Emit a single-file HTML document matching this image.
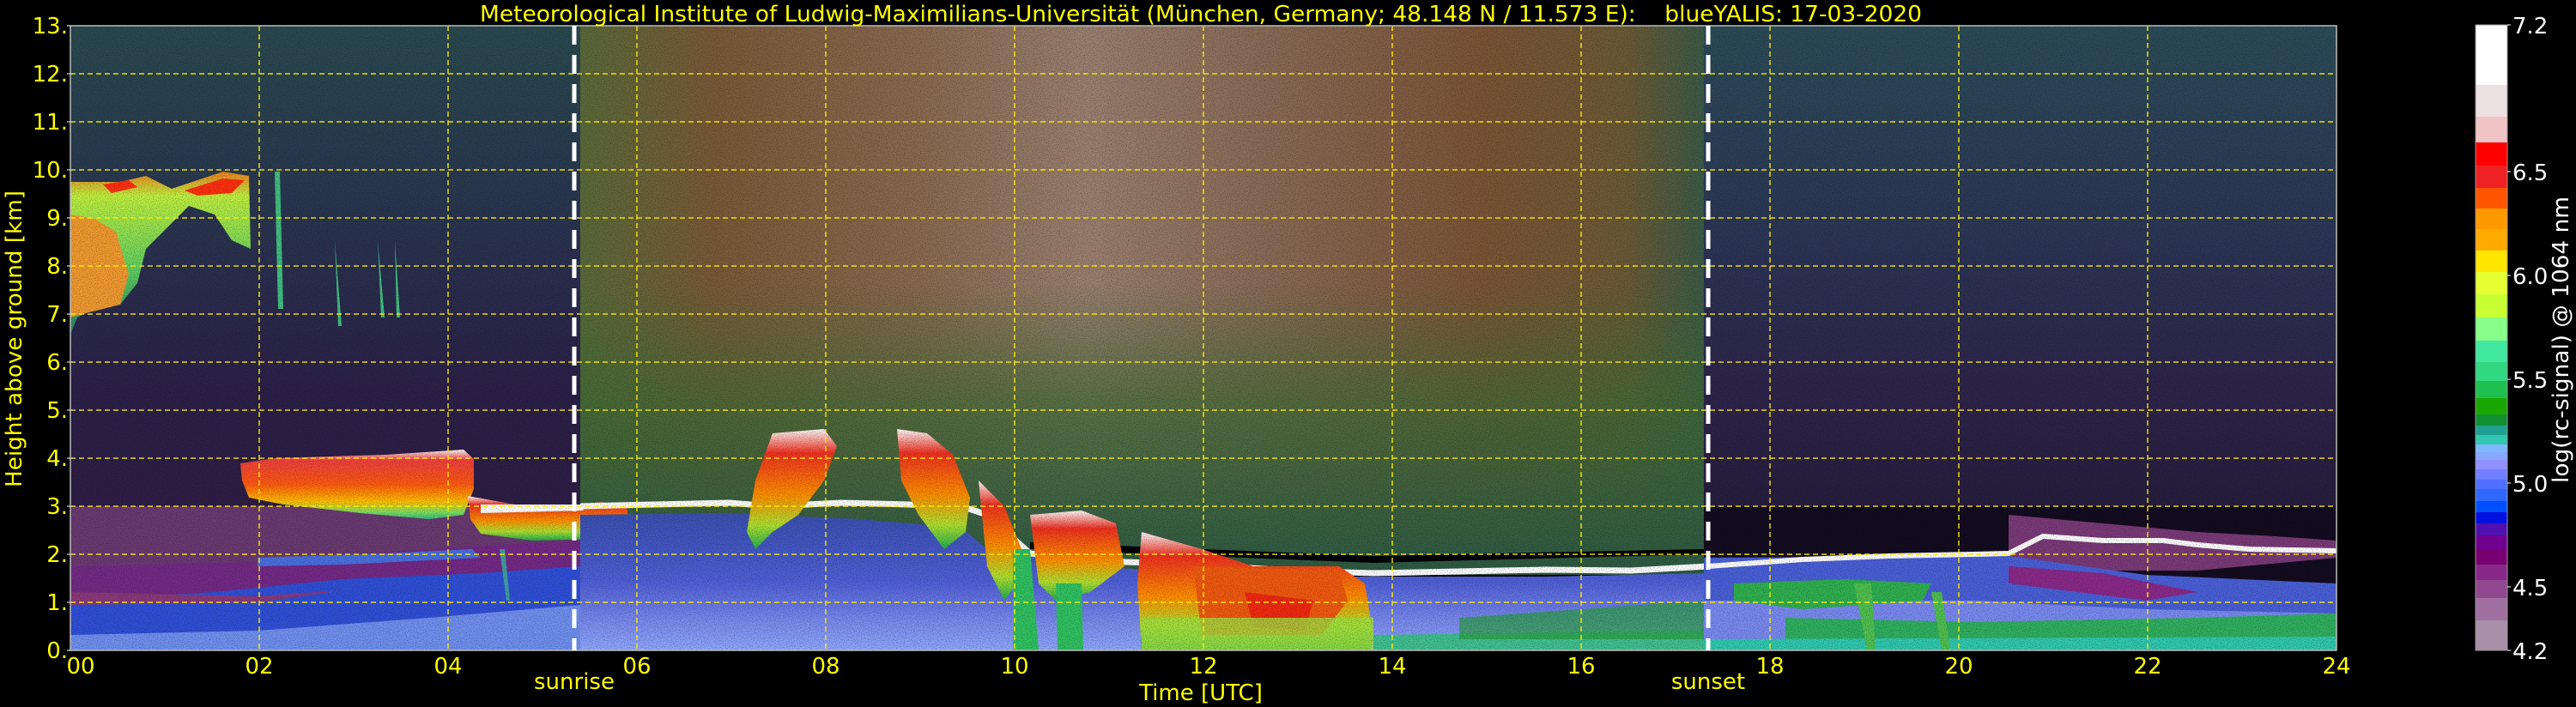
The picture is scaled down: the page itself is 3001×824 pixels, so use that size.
<!DOCTYPE html>
<html><head><meta charset="utf-8"><style>
html,body{margin:0;padding:0;background:#000;width:3001px;height:824px;overflow:hidden}
svg{display:block}
text{font-family:"DejaVu Sans","Liberation Sans",sans-serif}
</style></head><body>
<svg width="3001" height="824" viewBox="0 0 3001 824" xmlns="http://www.w3.org/2000/svg">
<defs>
<filter id="nz" x="0" y="0" width="100%" height="100%">
<feTurbulence type="fractalNoise" baseFrequency="0.9" numOctaves="1" seed="3"/>
<feColorMatrix type="matrix" values="0 0 0 0 0  0 0 0 0 0  0 0 0 0 0  0 0 0 -2.2 1.25"/>
</filter>
<linearGradient id="daytop" x1="0" x2="1" y1="0" y2="0">
<stop offset="0" stop-color="#5a6a3a"/><stop offset="0.12" stop-color="#7a5a38"/>
<stop offset="0.3" stop-color="#8a6a50"/><stop offset="0.45" stop-color="#9a8070"/>
<stop offset="0.6" stop-color="#8a6c58"/><stop offset="0.8" stop-color="#7c5436"/>
<stop offset="0.93" stop-color="#6a5a36"/><stop offset="1" stop-color="#3a5a48"/>
</linearGradient>
<linearGradient id="daygreen" x1="0" x2="0" y1="0" y2="1">
<stop offset="0" stop-color="#3f6a34" stop-opacity="0"/><stop offset="0.4" stop-color="#3f6a34" stop-opacity="0.7"/>
<stop offset="1" stop-color="#2c5a44" stop-opacity="1"/>
</linearGradient>
<linearGradient id="nightL" x1="0" x2="0" y1="0" y2="1">
<stop offset="0" stop-color="#2a4a50"/><stop offset="0.45" stop-color="#2a3250"/><stop offset="0.75" stop-color="#2c2048"/><stop offset="1" stop-color="#2e1e46"/>
</linearGradient>
<linearGradient id="nightR" x1="0" x2="0" y1="0" y2="1">
<stop offset="0" stop-color="#2c4c58"/><stop offset="0.4" stop-color="#2c3656"/><stop offset="0.7" stop-color="#2e244a"/><stop offset="1" stop-color="#241a38"/>
</linearGradient>
<linearGradient id="cloud1" x1="0" x2="0" y1="0" y2="1">
<stop offset="0" stop-color="#ffffff"/><stop offset="0.15" stop-color="#f04040"/><stop offset="0.5" stop-color="#ff5a10"/><stop offset="0.75" stop-color="#ffc000"/><stop offset="0.9" stop-color="#80e060"/><stop offset="1" stop-color="#30c080"/>
</linearGradient>
<linearGradient id="cloud2" x1="0" x2="0" y1="0" y2="1">
<stop offset="0" stop-color="#ffffff"/><stop offset="0.2" stop-color="#f03020"/><stop offset="0.55" stop-color="#ff9000"/><stop offset="0.8" stop-color="#b0e030"/><stop offset="1" stop-color="#20b050"/>
</linearGradient>
<linearGradient id="cirrus" x1="0" x2="0" y1="0" y2="1">
<stop offset="0" stop-color="#f08020"/><stop offset="0.15" stop-color="#c0f040"/><stop offset="0.6" stop-color="#60d060"/><stop offset="1" stop-color="#2a8060"/>
</linearGradient>
<linearGradient id="dayblue" x1="0" x2="0" y1="0" y2="1">
<stop offset="0" stop-color="#3a50b0"/><stop offset="0.5" stop-color="#5060d8"/><stop offset="0.8" stop-color="#7c8cf0"/><stop offset="1" stop-color="#90a8ff"/>
</linearGradient>
</defs>

<rect x="82" y="30" width="2640" height="728" fill="#000"/>
<rect x="82" y="30" width="600" height="570" fill="url(#nightL)"/>
<rect x="676" y="30" width="1312" height="640" fill="url(#daytop)"/>
<rect x="676" y="330" width="1312" height="340" fill="url(#daygreen)"/>
<rect x="1985" y="30" width="737" height="620" fill="url(#nightR)"/>

<!-- left night boundary layer -->
<path d="M82 590 L676 590 L676 758 L82 758Z" fill="#6a3a72"/>
<path d="M82 660 L300 655 L500 640 L676 630 L676 758 L82 758Z" fill="#742a86"/>
<path d="M82 700 L250 690 L400 675 L560 668 L676 660 L676 758 L82 758Z" fill="#3050d8"/>
<path d="M82 740 L300 735 L500 720 L676 705 L676 758 L82 758Z" fill="#7090f0"/>
<path d="M300 650 L450 645 L550 640 L560 650 L400 658 L300 660Z" fill="#4a70e0"/>
<path d="M82 690 L300 695 L400 688 L300 702 L82 705Z" fill="#8a3a7a"/>

<!-- cirrus -->
<path d="M82 212 L140 212 L170 205 L200 220 L230 210 L260 200 L290 205 L292 290 L270 280 L250 250 L220 240 L200 260 L170 290 L160 330 L140 355 L110 360 L90 370 L82 390Z" fill="url(#cirrus)"/>
<path d="M82 250 L110 255 L135 270 L150 320 L140 355 L100 365 L82 370Z" fill="#f09a30"/>
<path d="M120 215 L150 210 L160 218 L130 225Z M215 222 L260 208 L285 210 L270 225 L230 228Z" fill="#ff3010"/>
<path d="M320 200 L324 360 L330 360 L326 200Z M390 280 L394 380 L398 380Z M440 280 L444 370 L448 370Z M460 280 L462 370 L466 370Z" fill="#40c080"/>

<!-- cloud layer 02-05 -->
<path d="M280 540 L320 534 L450 530 L540 524 L552 535 L552 570 L540 600 L500 605 L420 598 L330 588 L290 580 L282 560Z" fill="url(#cloud1)"/>
<path d="M545 578 L600 588 L676 588 L700 585 L730 590 L735 620 L700 628 L620 630 L560 622 L548 605Z" fill="url(#cloud2)"/>
<path d="M560 588 L676 588 L680 595 L560 598Z" fill="#fff"/>
<path d="M582 640 L590 700 L594 700 L588 640Z" fill="#40a0a0"/>

<!-- day lower blue -->
<path d="M676 600 L850 598 L1000 605 L1120 615 L1150 640 L1300 662 L1500 672 L1800 672 L1988 668 L1988 758 L676 758Z" fill="url(#dayblue)"/>
<path d="M1985 646 L1600 656 L1200 640 L1200 632 L1600 648 L1985 640Z" fill="#000"/>
<path d="M676 590 L760 588 L850 586 L900 590 L980 586 L1060 588 L1120 590 L1150 600 L1200 645 L1250 650 L1310 655 L1400 658 L1500 665 L1600 668 L1800 664 L1900 665 L1990 660" fill="none" stroke="#fff" stroke-width="7"/>

<!-- day clouds -->
<path d="M900 505 L960 500 L975 520 L960 560 L930 600 L900 620 L880 640 L870 620 L880 560Z" fill="url(#cloud2)"/>
<path d="M1045 500 L1080 505 L1110 530 L1130 580 L1125 620 L1100 640 L1070 600 L1050 560Z" fill="url(#cloud2)"/>
<path d="M1140 560 L1170 590 L1190 640 L1185 680 L1170 700 L1150 660Z" fill="url(#cloud2)"/>
<path d="M1200 600 L1260 595 L1300 610 L1310 660 L1270 690 L1230 700 L1210 680Z" fill="url(#cloud2)"/>
<path d="M1180 640 L1200 640 L1210 758 L1180 758Z M1230 680 L1260 680 L1262 758 L1232 758Z" fill="#30c060"/>
<path d="M1330 620 L1400 640 L1460 660 L1560 660 L1590 680 L1600 740 L1595 758 L1330 758 L1325 680Z" fill="url(#cloud2)"/>
<path d="M1390 660 L1560 665 L1570 700 L1540 740 L1400 740 L1395 700Z" fill="#f05a10"/>
<path d="M1450 690 L1530 700 L1520 735 L1460 730Z" fill="#f02a10"/>
<path d="M1330 720 L1600 720 L1600 758 L1330 758Z" fill="#a0e040" opacity="0.8"/>
<path d="M1600 740 L1990 735 L1990 758 L1600 758Z" fill="#40c090"/>
<path d="M1700 720 L1985 700 L1985 745 L1700 745Z" fill="#2aa040" opacity="0.7"/>

<!-- right night -->
<path d="M1985 590 L2722 590 L2722 700 L1985 700Z" fill="#140c20"/>
<path d="M2340 600 L2450 610 L2560 620 L2650 625 L2722 630 L2722 650 L2560 665 L2450 665 L2340 660Z" fill="#7a3a78"/>
<path d="M1985 650 L2340 648 L2500 670 L2722 680 L2722 758 L1985 758Z" fill="#4a60d8"/>
<path d="M2340 660 L2450 668 L2560 690 L2500 700 L2340 680Z" fill="#8a2a8a"/>
<path d="M1985 700 L2300 700 L2500 710 L2722 715 L2722 758 L1985 758Z" fill="#7a8af0"/>
<path d="M2080 720 L2300 725 L2560 720 L2722 715 L2722 745 L2300 748 L2080 745Z" fill="#30b060"/>
<path d="M1985 745 L2722 742 L2722 758 L1985 758Z" fill="#30c8b0"/>
<path d="M2020 680 L2150 675 L2250 680 L2240 700 L2100 710 L2020 700Z" fill="#30b050"/>
<path d="M2160 680 L2175 758 L2185 758 L2180 680Z M2250 690 L2262 758 L2272 758 L2262 690Z" fill="#50c050"/>
<path d="M1990 660 L2100 652 L2200 648 L2300 646 L2340 645 L2380 625 L2450 630 L2520 630 L2560 635 L2620 640 L2722 642" fill="none" stroke="#fff" stroke-width="6"/>

<rect x="82" y="30" width="2640" height="728" fill="#000" filter="url(#nz)" opacity="0.35"/>

<g stroke="#ffee00" stroke-width="1.5" stroke-dasharray="6,4" fill="none" opacity="0.9">
<path d="M82 702H2722M82 646H2722M82 590H2722M82 534H2722M82 478H2722M82 422H2722M82 366H2722M82 310H2722M82 254H2722M82 198H2722M82 142H2722M82 86H2722"/>
<path d="M302 30V758M522 30V758M742 30V758M962 30V758M1182 30V758M1402 30V758M1622 30V758M1842 30V758M2062 30V758M2282 30V758M2502 30V758"/>
</g>
<rect x="82" y="30" width="2640" height="728" fill="none" stroke="#bbb" stroke-width="1.5"/>
<path d="M669 30V758M1990 30V758" stroke="#fff" stroke-width="5" stroke-dasharray="22,12"/>

<text x="559" y="25" fill="#ffff00" font-size="26" textLength="1680" lengthAdjust="spacingAndGlyphs" xml:space="preserve">Meteorological Institute of Ludwig-Maximilians-Universität (München, Germany; 48.148 N / 11.573 E):    blueYALIS: 17-03-2020</text>

<g fill="#ffff00" font-size="26" text-anchor="end">
<text x="79" y="39">13.</text><text x="79" y="95">12.</text><text x="79" y="151">11.</text><text x="79" y="207">10.</text>
<text x="79" y="263">9.</text><text x="79" y="319">8.</text><text x="79" y="375">7.</text><text x="79" y="431">6.</text>
<text x="79" y="487">5.</text><text x="79" y="543">4.</text><text x="79" y="599">3.</text><text x="79" y="655">2.</text>
<text x="79" y="711">1.</text><text x="79" y="767">0.</text>
</g>
<g stroke="#fff" stroke-width="1"><path d="M78 30H82M78 86H82M78 142H82M78 198H82M78 254H82M78 310H82M78 366H82M78 422H82M78 478H82M78 534H82M78 590H82M78 646H82M78 702H82M78 758H82"/></g>
<text transform="translate(25,395) rotate(-90)" fill="#ffff00" font-size="26" text-anchor="middle" textLength="346" lengthAdjust="spacingAndGlyphs">Height above ground [km]</text>

<g fill="#ffff00" font-size="26" text-anchor="middle">
<text x="94" y="785">00</text><text x="302" y="785">02</text><text x="522" y="785">04</text><text x="742" y="785">06</text>
<text x="962" y="785">08</text><text x="1182" y="785">10</text><text x="1402" y="785">12</text><text x="1622" y="785">14</text>
<text x="1842" y="785">16</text><text x="2062" y="785">18</text><text x="2282" y="785">20</text><text x="2502" y="785">22</text>
<text x="2722" y="785">24</text>
<text x="669" y="803">sunrise</text><text x="1990" y="803">sunset</text>
<text x="1399" y="816">Time [UTC]</text>
</g>

<g>
<rect x="2884" y="29" width="37" height="70" fill="#ffffff"/>
<rect x="2884" y="99" width="37" height="37" fill="#ebe0e2"/>
<rect x="2884" y="136" width="37" height="30" fill="#f0c4c4"/>
<rect x="2884" y="166" width="37" height="27" fill="#ff0000"/>
<rect x="2884" y="193" width="37" height="26" fill="#ee2222"/>
<rect x="2884" y="219" width="37" height="24" fill="#ff5500"/>
<rect x="2884" y="243" width="37" height="24" fill="#ff9900"/>
<rect x="2884" y="267" width="37" height="25" fill="#ffaa00"/>
<rect x="2884" y="292" width="37" height="25" fill="#ffe600"/>
<rect x="2884" y="317" width="37" height="26" fill="#e6ff33"/>
<rect x="2884" y="343" width="37" height="27" fill="#c8ff33"/>
<rect x="2884" y="370" width="37" height="27" fill="#88ff88"/>
<rect x="2884" y="397" width="37" height="25" fill="#40e8a0"/>
<rect x="2884" y="422" width="37" height="22" fill="#30d880"/>
<rect x="2884" y="444" width="37" height="20" fill="#20c050"/>
<rect x="2884" y="464" width="37" height="19" fill="#1aa800"/>
<rect x="2884" y="483" width="37" height="13" fill="#109030"/>
<rect x="2884" y="496" width="37" height="11" fill="#20a090"/>
<rect x="2884" y="507" width="37" height="11" fill="#30c8b0"/>
<rect x="2884" y="518" width="37" height="9" fill="#80b8ff"/>
<rect x="2884" y="527" width="37" height="9" fill="#88a8ff"/>
<rect x="2884" y="536" width="37" height="11" fill="#9090ff"/>
<rect x="2884" y="547" width="37" height="12" fill="#7080ff"/>
<rect x="2884" y="559" width="37" height="11" fill="#5070ff"/>
<rect x="2884" y="570" width="37" height="14" fill="#3068ff"/>
<rect x="2884" y="584" width="37" height="13" fill="#0050ff"/>
<rect x="2884" y="597" width="37" height="13" fill="#0010e0"/>
<rect x="2884" y="610" width="37" height="14" fill="#5010b0"/>
<rect x="2884" y="624" width="37" height="16" fill="#700090"/>
<rect x="2884" y="640" width="37" height="18" fill="#780070"/>
<rect x="2884" y="658" width="37" height="18" fill="#882888"/>
<rect x="2884" y="676" width="37" height="21" fill="#904890"/>
<rect x="2884" y="697" width="37" height="26" fill="#a070a0"/>
<rect x="2884" y="723" width="37" height="35" fill="#a890a8"/>
<rect x="2884" y="29" width="37" height="729" fill="none" stroke="#999" stroke-width="1"/>
</g>
<g stroke="#fff" stroke-width="1"><path d="M2921 29H2925M2921 200H2925M2921 321H2925M2921 442H2925M2921 563H2925M2921 684H2925M2921 758H2925"/></g>
<g fill="#fff" font-size="26">
<text x="2927" y="39">7.2</text><text x="2927" y="210">6.5</text><text x="2927" y="331">6.0</text>
<text x="2927" y="452">5.5</text><text x="2927" y="573">5.0</text><text x="2927" y="694">4.5</text><text x="2927" y="768">4.2</text>
</g>
<text transform="translate(2992,396) rotate(-90)" fill="#fff" font-size="26" text-anchor="middle" textLength="334" lengthAdjust="spacingAndGlyphs">log(rc-signal) @ 1064 nm</text>
</svg>
</body></html>
